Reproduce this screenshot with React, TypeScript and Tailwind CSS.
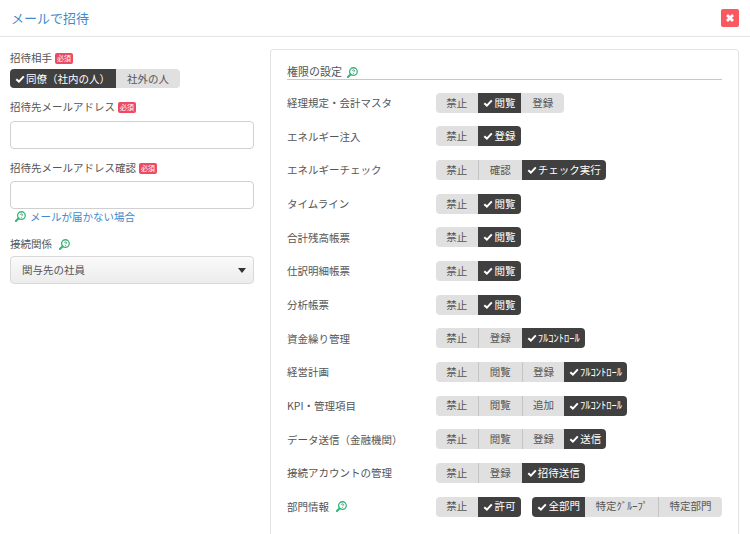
const font = '[font-family:"Noto_Sans_CJK_JP","Noto_Sans",sans-serif]';

function Help({ className = "" }: { className?: string }) {
  return (
    <svg viewBox="0 0 12 12" className={`w-[11px] h-[11px] shrink-0 ${className}`} fill="none">
      <circle cx="7" cy="5" r="4.2" stroke="#2eb872" strokeWidth="1.4" />
      <path d="M3.8 8.2 1 11" stroke="#2eb872" strokeWidth="2.2" strokeLinecap="round" />
      <path d="M5.7 4c.2-1.1 2.6-1.1 2.6.2 0 .8-1.3.8-1.3 1.5M7 6.5v.8" stroke="#2c7a6e" strokeWidth="0.9" />
    </svg>
  );
}

function Check() {
  return (
    <svg viewBox="0 0 10 10" className="w-[10px] h-[10px] mr-[1px] shrink-0" fill="none">
      <path d="M1.3 5.2 3.9 7.6 8.8 2.4" stroke="#fff" strokeWidth="2" />
    </svg>
  );
}

function Required() {
  return (
    <span className="inline-flex items-center justify-center w-[18px] h-[11px] rounded-[2px] bg-[#ee4a62] text-white text-[7px] leading-none">
      必須
    </span>
  );
}

type Btn = { t: string; w: number; on?: boolean };

function Group({ items }: { items: Btn[] }) {
  return (
    <div className="flex h-[20px] rounded-[4px] overflow-hidden">
      {items.map((b, i) => (
        <div
          key={i}
          style={{ width: b.w }}
          className={`flex items-center justify-center whitespace-nowrap text-[10.5px] leading-none ${
            b.on ? "bg-[#404040] text-white" : "bg-[#e0e0e0] text-[#555555]"
          } ${i > 0 && !b.on && !items[i - 1].on ? "border-l border-[#c4c4c4]" : ""}`}
        >
          {b.on && <Check />}
          {b.t}
        </div>
      ))}
    </div>
  );
}

const fc = "ﾌﾙｺﾝﾄﾛｰﾙ";
const rows: { label: string; help?: boolean; groups: Btn[][] }[] = [
  { label: "経理規定・会計マスタ", groups: [[{ t: "禁止", w: 42 }, { t: "閲覧", w: 43.5, on: true }, { t: "登録", w: 43 }]] },
  { label: "エネルギー注入", groups: [[{ t: "禁止", w: 42 }, { t: "登録", w: 43.5, on: true }]] },
  { label: "エネルギーチェック", groups: [[{ t: "禁止", w: 42 }, { t: "確認", w: 44 }, { t: "チェック実行", w: 84, on: true }]] },
  { label: "タイムライン", groups: [[{ t: "禁止", w: 42 }, { t: "閲覧", w: 43.5, on: true }]] },
  { label: "合計残高帳票", groups: [[{ t: "禁止", w: 42 }, { t: "閲覧", w: 43.5, on: true }]] },
  { label: "仕訳明細帳票", groups: [[{ t: "禁止", w: 42 }, { t: "閲覧", w: 43.5, on: true }]] },
  { label: "分析帳票", groups: [[{ t: "禁止", w: 42 }, { t: "閲覧", w: 43.5, on: true }]] },
  { label: "資金繰り管理", groups: [[{ t: "禁止", w: 42 }, { t: "登録", w: 44 }, { t: fc, w: 63, on: true }]] },
  { label: "経営計画", groups: [[{ t: "禁止", w: 42 }, { t: "閲覧", w: 44 }, { t: "登録", w: 42.5 }, { t: fc, w: 62.5, on: true }]] },
  { label: "KPI・管理項目", groups: [[{ t: "禁止", w: 42 }, { t: "閲覧", w: 44 }, { t: "追加", w: 42.5 }, { t: fc, w: 62.5, on: true }]] },
  { label: "データ送信（金融機関）", groups: [[{ t: "禁止", w: 42 }, { t: "閲覧", w: 44 }, { t: "登録", w: 42.5 }, { t: "送信", w: 42, on: true }]] },
  { label: "接続アカウントの管理", groups: [[{ t: "禁止", w: 42 }, { t: "登録", w: 44 }, { t: "招待送信", w: 63, on: true }]] },
  { label: "部門情報", help: true, groups: [[{ t: "禁止", w: 42 }, { t: "許可", w: 43.5, on: true }], [{ t: "全部門", w: 53, on: true }, { t: "特定ｸﾞﾙｰﾌﾟ", w: 73 }, { t: "特定部門", w: 63.5 }]] },
];

function Input() {
  return <div className="h-[28px] bg-white border border-[#d0d0d0] rounded-[4px]" />;
}

export default function App() {
  return (
    <div className={`w-[750px] h-[534px] overflow-hidden bg-white text-[#555555] text-[10.5px] ${font}`}>
      <header className="h-[37px] flex items-center justify-between pl-[11px] pr-[11px] border-b border-[#e5e5e5]">
        <h1 className="text-[13px] font-normal text-[#428bca]">メールで招待</h1>
        <button className="w-[18px] h-[18px] rounded-[2px] bg-[#f9595f] flex items-center justify-center">
          <svg viewBox="0 0 10 10" className="w-[10px] h-[10px]">
            <path d="M2 2 8 8M8 2 2 8" stroke="#fff" strokeWidth="2.8" />
          </svg>
        </button>
      </header>
      <div className="flex items-start pl-[10px] pr-[12px] pt-[12px] gap-[16px]">
        <div className="w-[244px] shrink-0 pt-[1px]">
          <div className="flex items-center gap-[3px] h-[16px]">
            招待相手 <Required />
          </div>
          <div className="flex mt-[3px] h-[19px] w-[170px] rounded-[4px] overflow-hidden">
            <div className="w-[106px] bg-[#404040] text-white flex items-center pl-[5px] whitespace-nowrap">
              <Check />同僚（社内の人）
            </div>
            <div className="flex-1 bg-[#e0e0e0] flex items-center justify-center">社外の人</div>
          </div>
          <div className="flex items-center gap-[3px] h-[16px] mt-[11px]">
            招待先メールアドレス <Required />
          </div>
          <div className="mt-[6px]"><Input /></div>
          <div className="flex items-center gap-[3px] h-[16px] mt-[11px]">
            招待先メールアドレス確認 <Required />
          </div>
          <div className="mt-[5px]"><Input /></div>
          <div className="flex items-center gap-[4px] h-[15px] mt-0 pl-[5px] text-[#428bca]">
            <Help /> メールが届かない場合
          </div>
          <div className="flex items-center gap-[7px] h-[16px] mt-[12px]">
            接続関係 <Help />
          </div>
          <div className="mt-[4px] h-[28px] border border-[#d8d8d8] rounded-[4px] bg-gradient-to-b from-[#fafafa] to-[#ececec] flex items-center justify-between pl-[11px] pr-[7px]">
            関与先の社員
            <span className="w-0 h-0 border-x-[4px] border-x-transparent border-t-[5px] border-t-[#333333]" />
          </div>
        </div>
        <div className="flex-1 h-[520px] border border-[#e2e2e2] rounded-[3px] pl-[16px] pr-[16px] pt-[13px]">
          <div className="flex items-center gap-[5px] h-[17px] border-b border-[#c8c8c8] text-[11px]">
            権限の設定 <Help className="mt-[2px]" />
          </div>
          <div className="mt-[6px]">
            {rows.map((r, i) => (
              <div key={i} className="flex items-center h-[33.67px]">
                <div className="w-[148.7px] shrink-0 flex items-center gap-[7px] whitespace-nowrap">
                  {r.label}
                  {r.help && <Help />}
                </div>
                <div className="flex gap-[11px]">
                  {r.groups.map((g, j) => <Group key={j} items={g} />)}
                </div>
              </div>
            ))}
          </div>
        </div>
      </div>
    </div>
  );
}
